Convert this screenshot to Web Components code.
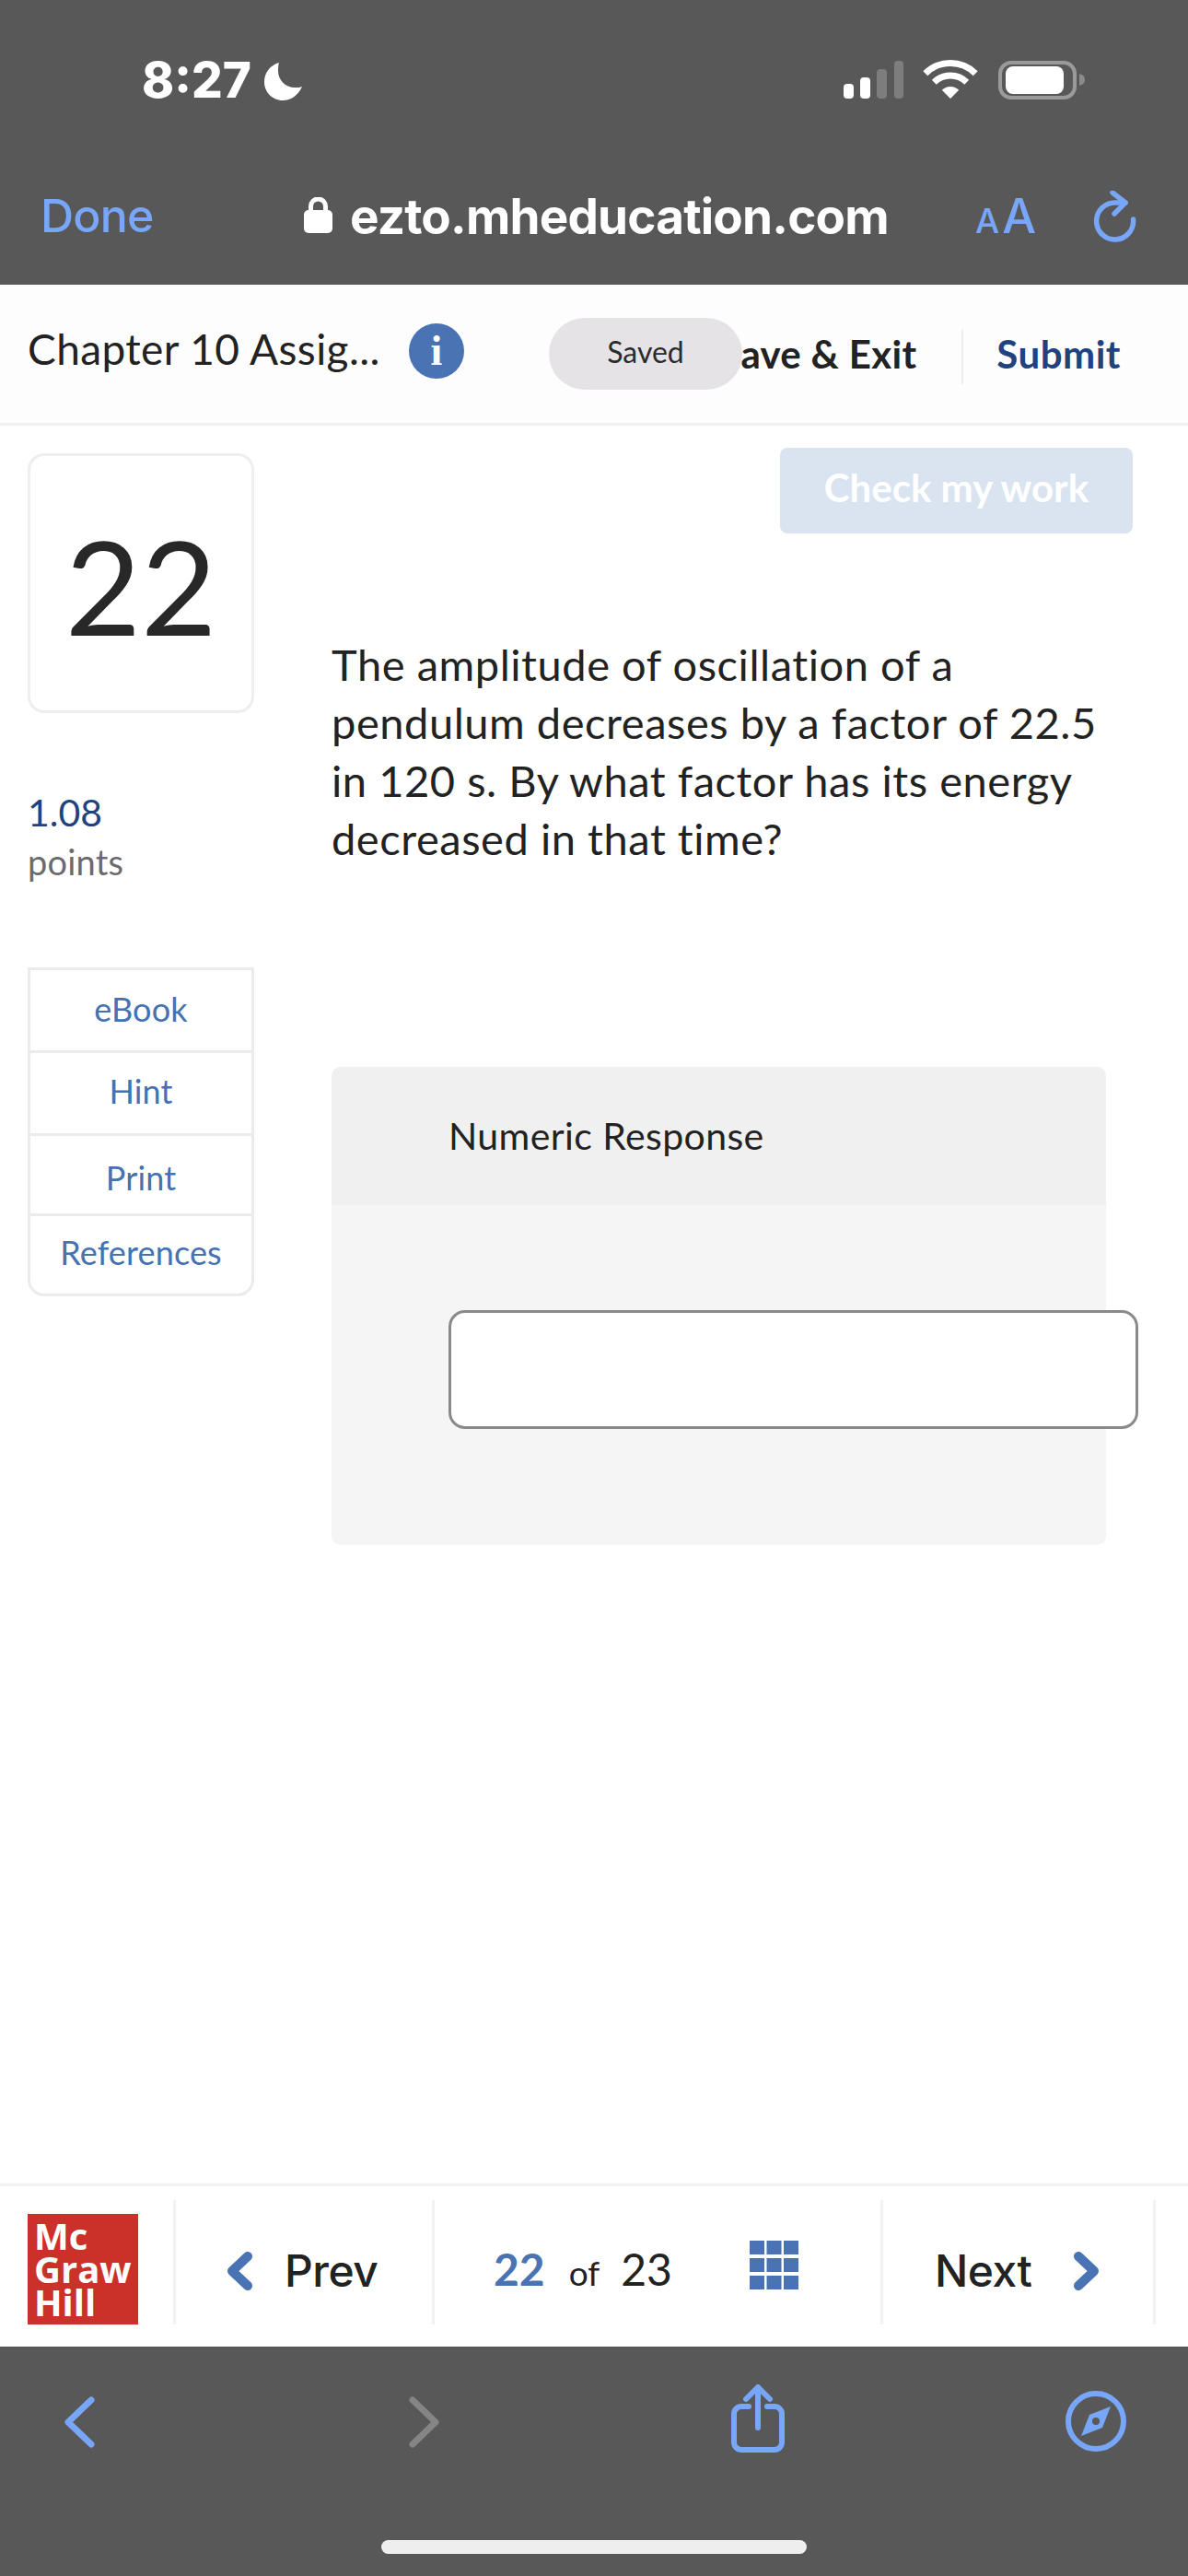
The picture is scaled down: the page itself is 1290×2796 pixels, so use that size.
<!DOCTYPE html>
<html><head><meta charset="utf-8"><title>Chapter 10 Assignment</title>
<style>
html,body{margin:0;padding:0;background:#fff}
body{width:1290px;height:2796px;display:flex;flex-direction:column;overflow:hidden;font-family:Lato,"Liberation Sans",sans-serif;color:#222}
</style></head><body>
<status-bar></status-bar>
<safari-bar></safari-bar>
<assignment-header></assignment-header>
<question-main>
  <question-rail slot="rail" number="22" points="1.08"></question-rail>
  <question-body slot="body">The amplitude of oscillation of a pendulum decreases by a factor of 22.5 in 120 s. By what factor has its energy decreased in that time?</question-body>
</question-main>
<footer-nav></footer-nav>
<safari-toolbar></safari-toolbar>
<script>
function def(name, html){
  customElements.define(name, class extends HTMLElement{
    connectedCallback(){
      if(this.shadowRoot) return;
      const r=this.attachShadow({mode:'open'});
      r.innerHTML = typeof html==='function' ? html(this) : html;
    }
  });
}
const SF='Inter,"Liberation Sans",sans-serif';
const BLUE='#78a6f8';
def('status-bar',`<style>
:host{display:flex;flex:none;height:130px;box-sizing:border-box;background:#585858;padding:61px 112px 0 154px;align-items:flex-start;color:#fff}
.t{font:800 53px/52px ${SF};width:133px;flex:none}
svg{display:block}
.moon{margin:7px 0 0 0}
.sp{flex:1}
</style>
<span class="t">8:27</span>
<svg class="moon" width="42" height="41" viewBox="0 0 42 41"><path d="M16 0C6 3 0 11 0 21c0 11 9 20 20 20 9 0 17-6 21-15-2 1-5 1-8 1C23 27 15 19 15 9c0-3 0-6 1-9z" fill="#fff"/></svg>
<span class="sp"></span>
<svg width="262" height="46" viewBox="916 65 262 46" style="margin-top:4px">
<rect x="916" y="91" width="11" height="16" rx="4" fill="#fff"/>
<rect x="934" y="84" width="11" height="23" rx="4" fill="#fff"/>
<rect x="952" y="75" width="11" height="32" rx="4" fill="#7d7d7d"/>
<rect x="971" y="66" width="10" height="41" rx="4" fill="#7d7d7d"/>
<g fill="none" stroke="#fff" stroke-width="7">
<path d="M1004.800 79.800a38.500 38.500 0 0 1 54.400 0"/><path d="M1014.300 89.300a25 25 0 0 1 35.400 0"/></g>
<path d="M1032 107l-9.200-9.200a13 13 0 0 1 18.400 0z" fill="#fff"/>
<rect x="1086" y="68" width="81" height="38" rx="12" fill="none" stroke="#9a9a9a" stroke-width="4"/>
<rect x="1092" y="72" width="63" height="30" rx="8" fill="#fff"/>
<path d="M1172 80c4 1 6 3 6 6.500s-2 5.500-6 6.500z" fill="#8b8b8b"/>
</svg>`);
def('safari-bar',`<style>
:host{display:grid;flex:none;height:179px;box-sizing:border-box;background:#585858;grid-template-columns:330px 729px 129px 1fr;align-items:start;padding-top:74px}
.done{padding-left:44px;font:500 50px/60px ${SF};color:${BLUE};letter-spacing:-.8px}
.url{display:flex;align-items:flex-start;gap:19px;color:#fff;font:700 53px/60px ${SF};letter-spacing:-.8px;margin-top:1px;white-space:nowrap}
.url svg{margin-top:9px;flex:none}
.aa{color:${BLUE};font:500 52px/60px ${SF};white-space:nowrap;margin-top:1px}
.aa small{font-size:37px;margin-right:3px}
svg{display:block}
</style>
<span class="done">Done</span>
<span class="url"><svg width="31" height="39" viewBox="0 0 31 39"><path d="M7.500 18v-8a8 8 0 0 1 16 0v8" fill="none" stroke="#fff" stroke-width="5"/><rect y="14" width="31" height="25" rx="5" fill="#fff"/></svg>ezto.mheducation.com</span>
<span class="aa"><small>A</small>A</span>
<svg width="46" height="56" viewBox="0 0 46 56" style="margin-top:3px"><path d="M34 13H24A20 20 0 1 0 42.500 31" fill="none" stroke="${BLUE}" stroke-width="5.500" stroke-linecap="round"/><path d="M20 2l14 11-12 12" fill="none" stroke="${BLUE}" stroke-width="5.500" stroke-linecap="round" stroke-linejoin="round"/></svg>`);
def('assignment-header',`<style>
:host{display:flex;flex:none;position:relative;height:153px;box-sizing:border-box;background:#fdfdfd;border-bottom:3px solid #f0f0f0;padding:0 73px 0 30px;align-items:center}
.title{font:400 46px/60px Lato,sans-serif;letter-spacing:.4px;color:#222;margin-top:-11px;white-space:nowrap;width:383px;flex:none}
.info{width:60px;height:60px;border-radius:50%;background:#4a73b4;color:#fff;font:700 46px/60px "Liberation Serif",serif;text-align:center;margin:-6px 0 0 31px;flex:none}
.sp{flex:1}
.save{font:700 42px/50px Lato,sans-serif;letter-spacing:.3px;color:#222;margin-top:-1px;white-space:nowrap}
.sep{width:2px;height:60px;background:#eee;margin:6px 36px 0 49px;flex:none}
.submit{font:700 42px/50px Lato,sans-serif;letter-spacing:.5px;color:#1f437f;margin-top:-1px}
.pill{position:absolute;left:596px;top:36px;width:210px;height:78px;border-radius:39px;background:#e5e3e6;color:#2b2b2b;font:400 32px/74px Lato,sans-serif;text-align:center}
</style>
<span class="title">Chapter 10 Assig...</span><span class="info">i</span><span class="sp"></span>
<span class="save">Save &amp; Exit</span><span class="sep"></span><span class="submit">Submit</span>
<span class="pill">Saved</span>`);
def('question-main',`<style>
:host{display:flex;flex:1;min-height:0;padding-left:30px;align-items:flex-start}
::slotted([slot=rail]){flex:none;width:246px}
::slotted([slot=body]){flex:none;margin-left:84px;width:841px}
</style><slot name="rail"></slot><slot name="body"></slot>`);
def('question-rail',(el)=>`<style>
:host{display:block;padding-top:30px;box-sizing:border-box}
.num{box-sizing:border-box;height:282px;border:3px solid #eee;border-radius:18px;text-align:center;font:400 142px/280px Lato,sans-serif;color:#282828}
.pts{margin-top:82px;font:400 41px/51px Lato,sans-serif;color:#1f437f}
.lbl{font:400 38px/51px Lato,sans-serif;letter-spacing:.2px;color:#6b6b6b;padding-top:3px}
.tools{margin-top:89px;border:3px solid #ebebeb;border-radius:0 0 18px 18px;box-sizing:border-box;height:357px;display:grid;grid-template-rows:90px 90px 87px 1fr;color:#4472b2;font:400 36px/1 Lato,sans-serif;letter-spacing:.15px;text-align:center}
.tools span{display:flex;align-items:center;justify-content:center;border-bottom:3px solid #ebebeb}
.tools span:nth-child(1){padding-bottom:4px}
.tools span:nth-child(2){padding-bottom:5px}
.tools span:nth-child(3){padding-top:6px}
.tools span:last-child{border:0;padding-bottom:6px}
</style>
<div class="num">${el.getAttribute('number')}</div>
<div class="pts">${el.getAttribute('points')}</div>
<div class="lbl">points</div>
<div class="tools"><span>eBook</span><span>Hint</span><span>Print</span><span>References</span></div>`);
def('question-body',`<style>
:host{display:block;padding-top:24px}
button{display:block;margin-left:487px;width:383px;height:93px;border:0;border-radius:8px;background:#dae4f0;color:#fff;font:700 42px/1 Lato,sans-serif;padding:0 0 8px}
p{margin:111px 0 216px;font:400 47px/63px Lato,sans-serif;letter-spacing:.55px;color:#222;width:860px}
.panel{height:519px;background:#f5f5f5;border-radius:10px}
.h{height:150px;box-sizing:border-box;background:#f0f0f0;border-radius:10px 10px 0 0;padding-left:127px;font:400 41px/150px Lato,sans-serif;letter-spacing:.4px;color:#222}
.in{margin:114px 0 0 127px;width:749px;height:129px;box-sizing:border-box;background:#fff;border:3px solid #8a8a8a;border-radius:18px}
</style>
<button>Check my work</button>
<p><slot></slot></p>
<div class="panel"><div class="h">Numeric Response</div><div class="in"></div></div>`);
def('footer-nav',`<style>
:host{display:grid;flex:none;height:177px;box-sizing:border-box;background:#fff;border-top:3px solid #f2f2f2;grid-template-columns:188px 281px 487px 296px;padding-top:15px;align-items:start}
.c{height:135px;box-sizing:border-box;border-right:3px solid #f2f2f2;display:flex;align-items:center;margin-right:-3px;padding-top:18px}
.logo{margin:15px 0 0 30px;width:120px;height:120px;background:#cc3129;color:#fff;font:700 40px/36px "Open Sans",sans-serif;padding:6px 0 0 7px;box-sizing:border-box}
.logo div{white-space:nowrap}
.w{font:500 48px/1 Inter,Roboto,sans-serif;color:#222;letter-spacing:-.5px}
svg{display:block;flex:none}
.pg{display:flex;align-items:baseline;margin-top:-3px}
.cur{font:700 48px/1 Lato,sans-serif;color:#4a73b4}
.of{font:400 37px/1 Lato,sans-serif;color:#222;margin:0 0 0 26px}
.tot{font:400 48px/1 Lato,sans-serif;color:#222;margin:0 0 0 23px}
</style>
<div class="c" style="align-items:flex-start;padding-top:0"><div class="logo"><div>Mc</div><div>Graw</div><div>Hill</div></div></div>
<div class="c" style="padding-left:59px;gap:35px">
<svg width="27" height="42" viewBox="0 0 27 42"><path d="M22 5L5 21l17 16" fill="none" stroke="#4a73b4" stroke-width="10" stroke-linecap="round" stroke-linejoin="round"/></svg>
<span class="w">Prev</span></div>
<div class="c" style="padding-left:67px">
<span class="pg"><span class="cur">22</span><span class="of">of</span><span class="tot">23</span></span>
<svg width="53" height="53" viewBox="0 0 53 53" style="margin:-13px 0 0 84px" fill="#4a73b4"><rect width="16" height="15"/><rect x="18.500" width="16" height="15"/><rect x="37" width="16" height="15"/><rect y="19" width="16" height="15"/><rect x="18.500" y="19" width="16" height="15"/><rect x="37" y="19" width="16" height="15"/><rect y="38" width="16" height="15"/><rect x="18.500" y="38" width="16" height="15"/><rect x="37" y="38" width="16" height="15"/></svg></div>
<div class="c" style="padding-left:59px;gap:46px">
<span class="w">Next</span>
<svg width="27" height="42" viewBox="0 0 27 42"><path d="M5 5l17 16L5 37" fill="none" stroke="#4a73b4" stroke-width="10" stroke-linecap="round" stroke-linejoin="round"/></svg></div>`);
def('safari-toolbar',`<style>
:host{display:block;flex:none;height:249px;box-sizing:border-box;background:#585858;padding-top:41px}
.r{display:flex;height:74px;align-items:flex-start;padding-left:70px}
svg{display:block;flex:none;fill:none}
.bar{width:462px;height:15px;border-radius:8px;background:#eee;margin:95px auto 0}
</style>
<div class="r">
<svg width="33" height="56" viewBox="0 0 33 56" style="margin-top:13px"><path d="M29 4L4 28l25 24" stroke="${BLUE}" stroke-width="7" stroke-linecap="round" stroke-linejoin="round"/></svg>
<svg width="33" height="56" viewBox="0 0 33 56" style="margin:13px 0 0 341px"><path d="M4 4l25 24L4 52" stroke="#858585" stroke-width="7" stroke-linecap="round" stroke-linejoin="round"/></svg>
<svg width="58" height="74" viewBox="0 0 58 74" style="margin-left:317px"><path d="M19 24H11a8 8 0 0 0-8 8v31a8 8 0 0 0 8 8h36a8 8 0 0 0 8-8V32a8 8 0 0 0-8-8h-8" stroke="${BLUE}" stroke-width="6" stroke-linecap="round"/><path d="M29 47V3M16 16L29 3l13 13" stroke="${BLUE}" stroke-width="6" stroke-linecap="round" stroke-linejoin="round"/></svg>
<svg width="66" height="66" viewBox="0 0 66 66" style="margin:7px 0 0 305px"><circle cx="33" cy="33" r="30" stroke="${BLUE}" stroke-width="6"/><path fill-rule="evenodd" d="M49 17L40 40 17 49l9-23zM33 29a4 4 0 1 0 0 8 4 4 0 0 0 0-8z" fill="${BLUE}"/></svg>
</div>
<div class="bar"></div>`);
</script>
</body></html>
